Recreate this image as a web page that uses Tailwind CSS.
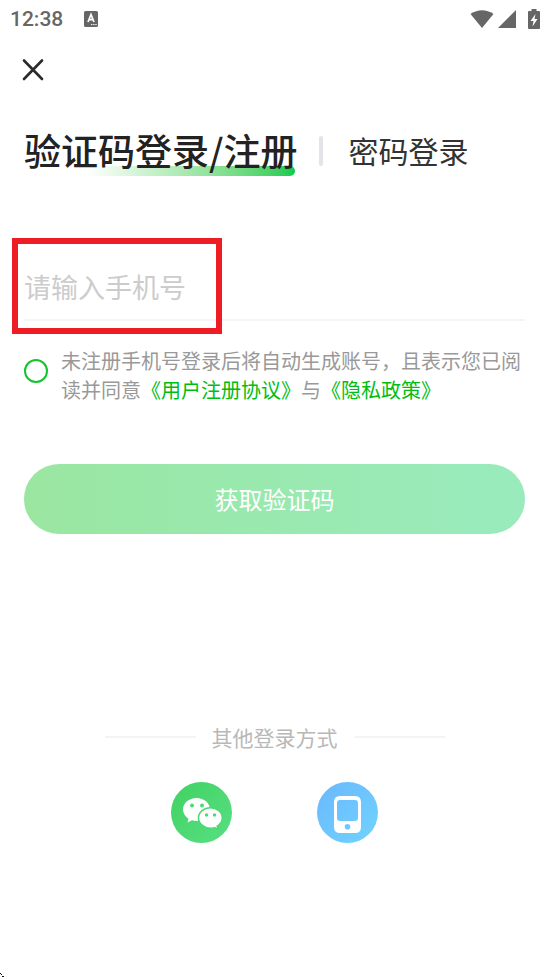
<!DOCTYPE html>
<html lang="zh-CN">
<head>
<meta charset="utf-8">
<meta name="viewport" content="width=device-width, initial-scale=1">
<title>登录</title>
<script src="https://cdn.jsdelivr.net/npm/@tailwindcss/browser@4"></script>
</head>
<body class="relative min-h-screen bg-white font-['Noto_Sans_CJK_SC',sans-serif] text-[#333]">
  <header class="flex h-[38px] items-center justify-between pl-[10px] pr-[9px] text-[#666]">
    <div class="flex items-center gap-5">
      <time class="font-[Roboto,sans-serif] text-[21px] font-medium leading-9">12:38</time>
      <svg class="h-4 w-4" viewBox="0 0 16 16" role="img" aria-label="输入法"><rect x="1" y="0" width="14" height="16" rx="1.5" fill="#666"/><path d="M5 11 8 3.5 11 11M6 8.7h4" fill="none" stroke="#fff" stroke-width="1.7"/><path d="M8 13.6h1.4M10.2 13.6h1.4M12.3 13.6h1.4" stroke="#fff" stroke-width="1"/></svg>
    </div>
    <div class="flex items-center gap-[4px]">
      <svg class="h-[18px] w-6" viewBox="0 0 24 18" role="img" aria-label="无线网络"><path d="M.5 4Q12-3.500 23.500 4L12 18Z" fill="#666"/></svg>
      <svg class="h-[18px] w-[18px]" viewBox="0 0 18 18" role="img" aria-label="信号"><path d="M18 0V18H0Z" fill="#666"/></svg>
      <svg class="ml-2 h-5 w-3" viewBox="0 0 12 20" role="img" aria-label="充电中"><path d="M3.500 0h5v2H11q1 0 1 1v16q0 1-1 1H1q-1 0-1-1V3q0-1 1-1h2.500Z" fill="#666"/><path d="M7.500 5 2.500 12H5.500L4.500 17.500 9.500 10H6.500Z" fill="#fff"/></svg>
    </div>
  </header>

  <main class="px-6">
    <button type="button" aria-label="关闭" class="mt-[22px] -ml-px block h-5 w-5">
      <svg class="h-5 w-5 overflow-visible" viewBox="0 0 20 20"><path d="M1 .5 19 19M19 .5 1 19" fill="none" stroke="#2b2b2b" stroke-width="2.600" stroke-linecap="round"/></svg>
    </button>

    <nav class="mt-12 flex h-12 items-start" aria-label="登录方式">
      <button type="button" class="relative isolate whitespace-nowrap pb-1 text-[37px] font-medium leading-11 text-[#222]">
        <span class="absolute right-[2px] bottom-0 -z-10 h-[10px] w-52 rounded-r-full bg-linear-to-r from-white to-[#00cb4f]"></span>验证码登录/注册</button>
      <span class="mt-2 ml-[22px] h-[30px] w-1 rounded-sm bg-[#e3e4ea]"></span>
      <button type="button" class="ml-[25px] whitespace-nowrap text-[30px] leading-11">密码登录</button>
    </nav>

    <form>
      <div class="relative mt-[78px]">
        <input type="tel" aria-label="手机号" placeholder="请输入手机号" class="block h-[67px] w-full border-b-2 border-[#f5f5f6] bg-transparent text-[27px] outline-none placeholder:text-[#ccc]">
        <div class="pointer-events-none absolute -left-3 -top-4 h-24 w-[210px] border-6 border-[#ee1c24]"></div>
      </div>

      <div class="mt-[25px] flex items-start gap-[13px]">
        <input id="agree" type="checkbox" class="mt-[13px] h-6 w-6 shrink-0 appearance-none rounded-full border-2 border-[#13c42e] checked:bg-[#13c42e]">
        <label for="agree" class="text-[20px] leading-[29px] text-[#999]">未注册手机号登录后将自动生成账号，且表示您已阅读并同意<a href="#terms" class="text-[#00bd12]">《用户注册协议》</a>与<a href="#privacy" class="text-[#00bd12]">《隐私政策》</a></label>
      </div>

      <button type="button" class="mt-15 h-[70px] w-full rounded-full bg-linear-to-r from-[#9ae6a1] to-[#99ebbd] text-[24px] text-white">获取验证码</button>
    </form>

    <section class="mt-[187px]">
      <h2 class="flex items-center justify-center gap-4 text-[21px] leading-8 text-[#b8b8b8]">
        <span class="h-[2px] w-[91px] bg-[#f3f3f8]"></span>其他登录方式<span class="h-[2px] w-[91px] bg-[#f3f3f8]"></span>
      </h2>
      <div class="mt-[29px] flex justify-center gap-[85px]">
        <button type="button" aria-label="微信登录" class="h-[61px] w-[61px] rounded-full bg-linear-to-br from-[#40d262] to-[#58df82]">
          <svg class="h-full w-full" viewBox="0 0 61 61">
            <path d="M25.500 16C18 16 12 21 12 27.500C12 31 14 34.500 17.500 36.700L16.500 40.500L21 38.300Q23.300 39 26 39C33 39 39 34 39 27.500S33 16 25.500 16Z" fill="#fff"/>
            <path d="M39.300 25.700C33 25.700 27.500 30 27.500 35.700S33 46.300 39.300 46.300Q41.500 46.300 43.500 45.600L47 47.500L46.200 44.200Q51.300 41 51.300 35.700C51.300 30 46 25.700 39.300 25.700Z" fill="#fff" stroke="#4cd973" stroke-width="1.500"/>
            <g fill="#4cd973"><circle cx="21" cy="23.500" r="2"/><circle cx="31" cy="23.500" r="2"/><circle cx="35.500" cy="33" r="1.700"/><circle cx="43.500" cy="33" r="1.700"/></g>
          </svg>
        </button>
        <button type="button" aria-label="手机登录" class="h-[61px] w-[61px] rounded-full bg-linear-to-br from-[#6bb8fd] to-[#70d3ff]">
          <svg class="h-full w-full" viewBox="0 0 61 61"><path fill-rule="evenodd" d="M23 14H38Q44 14 44 20V45Q44 51 38 51H23Q17 51 17 45V20Q17 14 23 14ZM23 18Q20 18 20 21V36Q20 39 23 39H38Q41 39 41 36V21Q41 18 38 18ZM30.500 42A2.800 2.800 0 1 0 30.500 47.600A2.800 2.800 0 1 0 30.500 42Z" fill="#fff"/></svg>
        </button>
      </div>
    </section>
  </main>
  <svg class="absolute bottom-0 left-0 h-[5px] w-1" viewBox="0 0 4 5" aria-hidden="true"><path d="M0 1h1v1H0zM1 2h1v1H1zM2 4h2v1H2z" fill="#111"/></svg>
</body>
</html>
